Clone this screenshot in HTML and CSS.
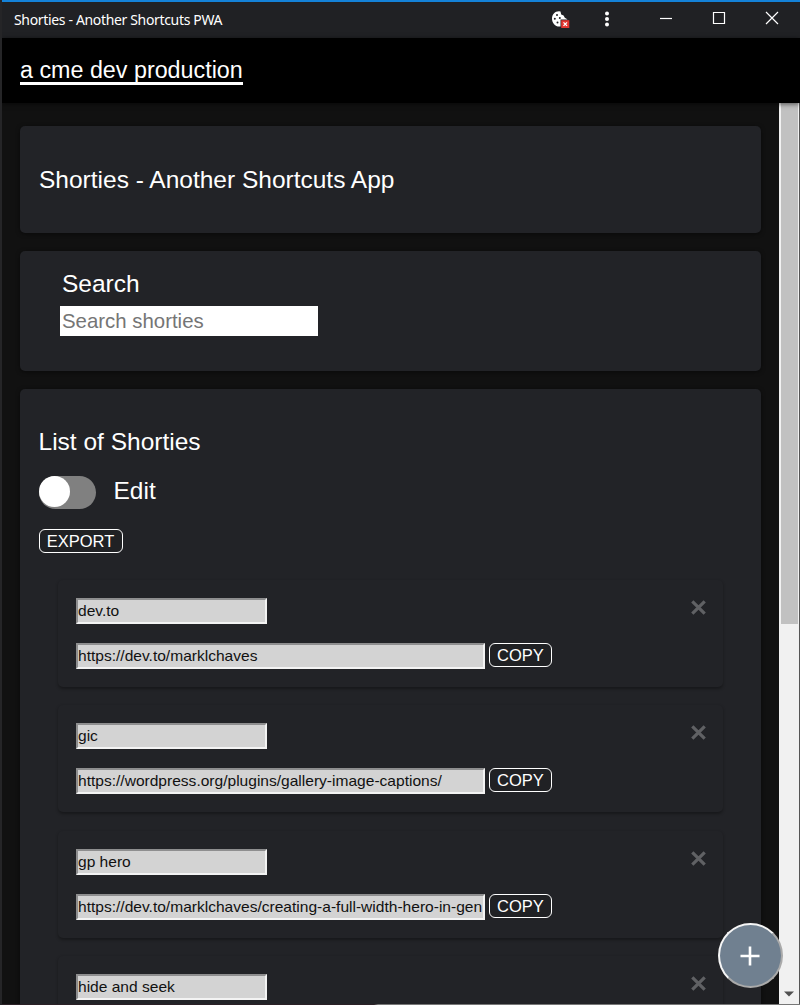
FILE: index.html
```
<!DOCTYPE html>
<html lang="en">
<head>
<meta charset="utf-8">
<title>Shorties - Another Shortcuts PWA</title>
<link rel="stylesheet" href="styles.css">
</head>
<body>
<div class="window">
  <div class="titlebar">
    <span class="titlebar-text">Shorties - Another Shortcuts PWA</span>
    <svg class="cookie" width="20" height="20" viewBox="0 0 20 20">
      <path d="M9 1.2C4.700 1.200 2 4.500 2 8.700C2 13 5.200 16.500 9.300 16.500C13.500 16.500 17 13.500 17.300 9.200L14.800 7.800L13.600 5.500L11.200 4.500L10.500 1.500Z" fill="#fff"/>
      <g fill="#202124"><circle cx="7" cy="5" r="1"/><circle cx="4.800" cy="8.800" r="1"/><circle cx="9.800" cy="8" r="1"/><circle cx="7.500" cy="12.500" r="1"/></g>
      <path d="M10.500 9.500H20V18H10.500Z" fill="#202124"/>
      <path d="M11.200 10.200H19.300V18H11.200Z" fill="#e3352f"/>
      <path d="M13.500 12.400L17 15.900M17 12.400L13.500 15.900" stroke="#fff" stroke-width="1.300"/>
    </svg>
    <svg class="dots" width="6" height="18" viewBox="0 0 6 18" fill="#fff"><circle cx="3" cy="3.500" r="2"/><circle cx="3" cy="9" r="2"/><circle cx="3" cy="14.500" r="2"/></svg>
    <svg class="win-icon" width="14" height="14" viewBox="0 0 14 14"><path d="M1 7.500H13"/></svg>
    <svg class="win-icon" width="14" height="14" viewBox="0 0 14 14"><path d="M1.500 1.500H12.500V12.500H1.500Z"/></svg>
    <svg class="win-icon" width="14" height="14" viewBox="0 0 14 14"><path d="M1 1L13 13M13 1L1 13"/></svg>
  </div>
  <header class="header"><a class="brand">a cme dev production</a></header>
  <div class="viewport">
    <main class="content">
      <section class="card card-title"><h1 class="heading">Shorties - Another Shortcuts App</h1></section>
      <section class="card card-search">
        <label class="heading search-label" for="q">Search</label>
        <input id="q" class="search" type="text" placeholder="Search shorties">
      </section>
      <section class="card card-list">
        <h2 class="heading">List of Shorties</h2>
        <div class="edit-row"><span class="toggle"><span class="knob"></span></span><span class="heading edit-label">Edit</span></div>
        <button class="btn btn-export">EXPORT</button>
        <div class="items">
          <article class="item">
            <div class="fields"><input class="field name" value="dev.to" readonly>
            <div class="url-row"><input class="field url" value="https://dev.to/marklchaves" readonly><button class="btn">COPY</button></div></div>
            <svg class="remove" width="15" height="15" viewBox="0 0 15 15"><path d="M1.300 1.300L13.700 13.700M13.700 1.300L1.300 13.700"/></svg>
          </article>
          <article class="item">
            <div class="fields"><input class="field name" value="gic" readonly>
            <div class="url-row"><input class="field url" value="https://wordpress.org/plugins/gallery-image-captions/" readonly><button class="btn">COPY</button></div></div>
            <svg class="remove" width="15" height="15" viewBox="0 0 15 15"><path d="M1.300 1.300L13.700 13.700M13.700 1.300L1.300 13.700"/></svg>
          </article>
          <article class="item">
            <div class="fields"><input class="field name" value="gp hero" readonly>
            <div class="url-row"><input class="field url" value="https://dev.to/marklchaves/creating-a-full-width-hero-in-gen" readonly><button class="btn">COPY</button></div></div>
            <svg class="remove" width="15" height="15" viewBox="0 0 15 15"><path d="M1.300 1.300L13.700 13.700M13.700 1.300L1.300 13.700"/></svg>
          </article>
          <article class="item">
            <div class="fields"><input class="field name" value="hide and seek" readonly></div>
            <svg class="remove" width="15" height="15" viewBox="0 0 15 15"><path d="M1.300 1.300L13.700 13.700M13.700 1.300L1.300 13.700"/></svg>
          </article>
        </div>
      </section>
    </main>
    <div class="scrollbar">
      <div class="thumb"></div>
      <svg class="arrow" width="10" height="6" viewBox="0 0 10 6"><path d="M0 0.500H10L5 5.500Z" fill="#505050"/></svg>
    </div>
  </div>
  <div class="bottom-edge"></div>
  <button class="fab" aria-label="Add"><svg width="20" height="20" viewBox="0 0 20 20"><path d="M10 0.500V19.500M0.500 10H19.500" stroke="#fff" stroke-width="2.600"/></svg></button>
</div>
</body>
</html>
```
FILE: styles.css
```
* { box-sizing: border-box; }
body {
  margin: 0;
  background: #111;
  color: #fff;
  font-family: "Liberation Sans", Arial, sans-serif;
}
.window {
  position: relative;
  display: flex;
  flex-direction: column;
  width: 800px;
  height: 1005px;
  overflow: hidden;
  border-left: 2px solid #252527;
}
.titlebar {
  flex: none;
  display: flex;
  align-items: center;
  height: 38px;
  padding: 0 21px 0 12px;
  background: #202124;
  border-top: 2px solid #1482d8;
}
.titlebar-text {
  flex: 1;
  font: 14px/20px "Noto Sans", sans-serif;
  letter-spacing: -0.34px;
}
.cookie { margin-right: 34px; }
.dots { margin-right: 49px; margin-top: -2px; }
.win-icon { margin-right: 39px; margin-top: -4px; fill: none; stroke: #fff; stroke-width: 1.2; }
.win-icon:last-child { margin-right: 0; }
.header {
  flex: none;
  position: relative;
  z-index: 1;
  height: 65px;
  padding: 18px 18px 0;
  background: #000;
  box-shadow: 0 1px 5px rgba(0, 0, 0, .6);
}
.brand {
  display: inline-block;
  height: 29px;
  border-bottom: 3px solid #fff;
  font-size: 23.300px;
  line-height: 28px;
  white-space: nowrap;
}
.viewport { flex: 1; min-height: 0; display: flex; }
.content {
  flex: 1;
  display: flex;
  flex-direction: column;
  gap: 18.500px;
  padding: 23px 18px 0;
}
.card {
  flex: none;
  border-radius: 5px;
  background: #222327;
  box-shadow: 0 1px 4px rgba(0, 0, 0, .5);
}
.heading {
  display: block;
  margin: 0;
  font-size: 24.500px;
  line-height: 28px;
  font-weight: 400;
}
.card-title { height: 106.500px; padding: 40px 19px; }
.card-search { height: 119.500px; padding: 19px 40px; }
.search-label { padding-left: 2px; }
.search {
  display: block;
  width: 258px;
  height: 30px;
  margin-top: 8px;
  padding: 0 2px;
  border: 0;
  background: #fff;
  font: 20.400px "Liberation Sans", Arial, sans-serif;
}
.search::placeholder { color: #757575; }
.card-list { height: 700px; padding: 39px 38px 0 18.500px; }
.edit-row { display: flex; margin-top: 19.500px; }
.toggle { width: 57px; height: 33px; border-radius: 17px; background: #808080; }
.knob { display: block; width: 31px; height: 31px; border-radius: 50%; background: #fff; }
.edit-label { margin-left: 18px; line-height: 30px; }
.btn {
  display: block;
  height: 24px;
  padding: 0 7px;
  border: 1.500px solid #fff;
  border-radius: 6px;
  background: #202124;
  color: #fff;
  font: 16.500px/20px "Liberation Sans", Arial, sans-serif;
}
.btn-export { margin-top: 20px; width: 84px; }
.items { display: flex; flex-direction: column; gap: 18.500px; margin: 27px 0 0 19.500px; }
.item {
  display: flex;
  justify-content: space-between;
  height: 107px;
  padding: 18px 17px 0 18px;
  border-radius: 5px;
  box-shadow: 0 1.500px 3px rgba(0, 0, 0, .32);
}
.fields { display: flex; flex-direction: column; gap: 19px; }
.field {
  height: 26px;
  padding: 0;
  border: 2px solid;
  border-color: #8e8e8f #f3f3f3 #f3f3f3 #8e8e8f;
  background: #d3d3d3;
  color: #111;
  font: 15.550px "Liberation Sans", Arial, sans-serif;
}
.name { width: 191px; }
.url { width: 409px; }
.url-row { display: flex; gap: 4px; }
.url-row .btn { width: 63px; }
.remove { margin-top: 2px; stroke: #606164; stroke-width: 3.2; }
.scrollbar {
  position: relative;
  width: 21px;
  background: #f1f1f1;
  border-right: 1px solid #555;
}
.thumb { height: 521px; margin: 0 1px 0 2px; background: #c1c1c1; }
.arrow { position: absolute; left: 5px; bottom: 7px; }
.bottom-edge {
  flex: none;
  height: 1px;
  background: linear-gradient(90deg, #2b2026 372px, #777 376px);
}
.fab {
  position: absolute;
  left: 715.500px;
  top: 923px;
  display: grid;
  place-items: center;
  width: 65px;
  height: 65px;
  padding: 0;
  border: 2px solid;
  border-color: #f6f6f6 #aaa #aaa #f6f6f6;
  border-radius: 50%;
  background: #708090;
}
```
